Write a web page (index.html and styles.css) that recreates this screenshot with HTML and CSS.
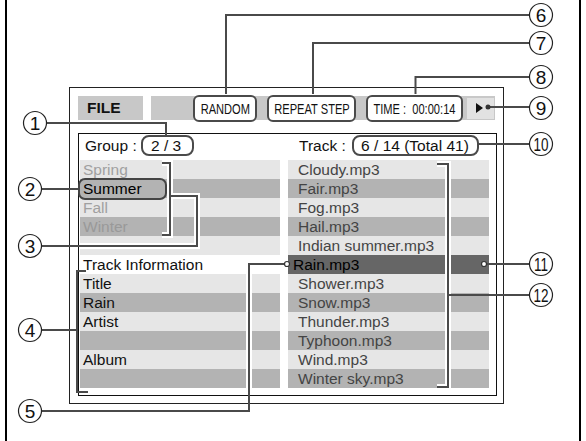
FILE: index.html
```html
<!DOCTYPE html>
<html>
<head>
<meta charset="utf-8">
<title>File screen</title>
<link rel="stylesheet" href="styles.css">
</head>
<body>
<div class="sheet">
  <div class="frame">
    <div class="screen">
      <div class="topbar">
        <div class="file">FILE</div>
        <div class="bar">
          <span class="tag tag-random"><span>RANDOM</span></span>
          <span class="tag tag-repeat"><span>REPEAT STEP</span></span>
          <span class="tag tag-time"><span>TIME :&nbsp; 00:00:14</span></span>
          <span class="play"><i class="tri"></i></span>
        </div>
      </div>

      <div class="panel">
        <div class="panel-head">
          <div class="group">Group : <span class="count count-group">2 / 3</span></div>
          <div class="track">Track : <span class="count count-track">6 / 14 (Total 41)</span></div>
        </div>
        <div class="lists">
          <ul class="list list-left">
            <li class="light dim">Spring</li>
            <li class="shade"><span class="picked">Summer</span></li>
            <li class="light dim">Fall</li>
            <li class="shade dim">Winter</li>
            <li class="light"></li>
            <li class="blank">Track Information</li>
            <li class="light">Title</li>
            <li class="shade">Rain</li>
            <li class="light">Artist</li>
            <li class="shade"></li>
            <li class="light">Album</li>
            <li class="shade"></li>
          </ul>
          <ul class="list list-right">
            <li class="light">Cloudy.mp3</li>
            <li class="shade">Fair.mp3</li>
            <li class="light">Fog.mp3</li>
            <li class="shade">Hail.mp3</li>
            <li class="light">Indian summer.mp3</li>
            <li class="dark">Rain.mp3</li>
            <li class="light">Shower.mp3</li>
            <li class="shade">Snow.mp3</li>
            <li class="light">Thunder.mp3</li>
            <li class="shade">Typhoon.mp3</li>
            <li class="light">Wind.mp3</li>
            <li class="shade">Winter sky.mp3</li>
          </ul>
        </div>
      </div>
    </div>
  </div>

  <!-- callout lines and numbered circles -->
  <svg class="callouts" width="586" height="441" viewBox="0 0 586 441">
    <g class="halo">
      <path d="M162 163 H170 V235 H162"/>
      <path d="M170 196 H197 V246 H80"/>
      <path d="M437 164 H448 V387 H437"/>
      <path d="M249 274 V388"/>
    </g>
    <g class="lines">
      <path d="M46 123 H166 V135"/>
      <path d="M41 189 H78"/>
      <path d="M162 163 H170 V235 H162"/>
      <path d="M170 196 H197 V246 H41"/>
      <path d="M86 271 H77 V392 H88"/>
      <path d="M41 330 H77"/>
      <path d="M41 411 H249 V264 H284.5"/>
      <path d="M226 94 V15 H530"/>
      <path d="M313 94 V43 H530"/>
      <path d="M415.5 94 V77 H530"/>
      <path d="M488 107 H530"/>
      <path d="M479 144 H530"/>
      <path d="M486.5 264 H530"/>
      <path d="M437 164 H448 V387 H437"/>
      <path d="M448 295 H530"/>
    </g>
    <circle class="pin" cx="287" cy="264" r="2.5"/>
    <circle class="pin" cx="484" cy="264" r="2.5"/>
    <circle class="dot" cx="488" cy="107" r="2.5"/>

    <g class="nums">
      <circle cx="35" cy="123" r="11.5"/><text x="35" y="130">1</text>
      <circle cx="30" cy="189" r="11.5"/><text x="30" y="196">2</text>
      <circle cx="30" cy="246" r="11.5"/><text x="30" y="253">3</text>
      <circle cx="30" cy="330" r="11.5"/><text x="30" y="337">4</text>
      <circle cx="30" cy="411" r="11.5"/><text x="30" y="418">5</text>
      <circle cx="541" cy="15" r="11.5"/><text x="541" y="22">6</text>
      <circle cx="541" cy="43" r="11.5"/><text x="541" y="50">7</text>
      <circle cx="541" cy="77" r="11.5"/><text x="541" y="84">8</text>
      <circle cx="541" cy="108" r="11.5"/><text x="541" y="115">9</text>
      <circle cx="541" cy="144" r="11.5"/><text x="541" y="151" textLength="15" lengthAdjust="spacingAndGlyphs">10</text>
      <circle cx="541" cy="264" r="11.5"/><text x="541" y="271" textLength="14" lengthAdjust="spacingAndGlyphs">11</text>
      <circle cx="541" cy="295" r="11.5"/><text x="541" y="302" textLength="15" lengthAdjust="spacingAndGlyphs">12</text>
    </g>
  </svg>
</div>
</body>
</html>
```

FILE: styles.css
```css
body {
  margin: 0;
  background: #fff;
  font-family: "Liberation Sans", Arial, sans-serif;
  color: #111;
}

.sheet {
  position: relative;
  width: 586px;
  height: 441px;
  overflow: hidden;
}

.frame {
  margin-left: 5px;
  width: 576px;
  height: 441px;
  box-sizing: border-box;
  border-left: 2px solid #000;
  border-right: 2px solid #000;
  padding-top: 87px;
}

.screen {
  margin-left: 62px;
  width: 435px;
  height: 317px;
  box-sizing: border-box;
  border: 1px solid #222;
  padding: 8px 8px 7px 8px;
}

/* top bar */
.topbar {
  display: flex;
  gap: 8px;
  height: 24px;
}

.file {
  width: 65px;
  box-sizing: border-box;
  padding-left: 9px;
  background: #c8c8c8;
  font-weight: bold;
  font-size: 15.5px;
  line-height: 24px;
}

.bar {
  flex: 1;
  display: flex;
  align-items: center;
  justify-content: flex-end;
  gap: 10px;
  padding-right: 1px;
  background: #c8c8c8;
}

.tag {
  display: flex;
  align-items: center;
  justify-content: center;
  height: 27px;
  box-sizing: border-box;
  border: 2px solid #4a4a4a;
  border-radius: 6px;
  background: #fff;
  font-size: 15px;
  white-space: nowrap;
}

.tag span {
  display: inline-block;
  transform: scaleX(0.74);
}

.tag-random { width: 64px; }
.tag-repeat { width: 89px; }
.tag-time { width: 97px; }

.play {
  width: 27px;
  height: 21px;
  margin-left: -6px;
  background: #e2e2e2;
  display: flex;
  align-items: center;
}

.tri {
  display: block;
  margin-left: 9px;
  width: 0;
  height: 0;
  border-left: 7px solid #111;
  border-top: 5px solid transparent;
  border-bottom: 5px solid transparent;
}

/* file panel */
.panel {
  margin-top: 13px;
  width: 419px;
  height: 263px;
  box-sizing: border-box;
  border: 1px solid #111;
  padding: 0 7px 7px 1px;
}

.panel-head {
  display: grid;
  grid-template-columns: 200px 201px;
  column-gap: 8px;
  height: 26px;
  padding-top: 1px;
  box-sizing: border-box;
  font-size: 15.5px;
}

.group { padding-left: 5px; }
.track { padding-left: 11px; }

.count {
  display: inline-block;
  height: 21px;
  box-sizing: border-box;
  border: 2px solid #4a4a4a;
  border-radius: 8px;
  line-height: 17px;
  background: #fff;
}

.count-group { width: 53px; padding-left: 8px; }
.count-track { width: 127px; padding-left: 7px; margin-left: 2px; }

.lists {
  display: grid;
  grid-template-columns: 200px 201px;
  column-gap: 8px;
}

.list {
  margin: 0;
  padding: 0;
  list-style: none;
  font-size: 15.5px;
}

.list li {
  display: flex;
  align-items: center;
  height: 19px;
  padding-top: 1px;
  box-sizing: border-box;
  white-space: nowrap;
}

.list-left li { padding-left: 3px; }
.list-right li { padding-left: 10px; color: #444; }

.light { background: #e6e6e6; }
.shade { background: #b3b3b3; }
.blank { background: #fff; }

.list-right li.dark {
  background: #666;
  color: #000;
  padding-left: 5px;
}

.list-left .dim { color: #a0a0a0; }
.list-left .shade.dim { color: #999; }

.picked {
  height: 22px;
  box-sizing: border-box;
  margin: -2px 0 -1px -5px;
  padding: 0 23px 0 3px;
  border: 2px solid #444;
  border-radius: 7px;
  line-height: 18px;
  color: #000;
}

/* callouts */
.callouts {
  position: absolute;
  left: 0;
  top: 0;
}

.halo path {
  fill: none;
  stroke: #fff;
  stroke-width: 6;
}

.lines path {
  fill: none;
  stroke: #4a4a4a;
  stroke-width: 2;
}

.pin {
  fill: #fff;
  stroke: #333;
  stroke-width: 1.2;
}

.dot { fill: #333; }

.nums circle {
  fill: #fff;
  stroke: #222;
  stroke-width: 1.2;
}

.nums text {
  font-family: "Liberation Sans", Arial, sans-serif;
  font-size: 19px;
  text-anchor: middle;
  fill: #111;
}
```
